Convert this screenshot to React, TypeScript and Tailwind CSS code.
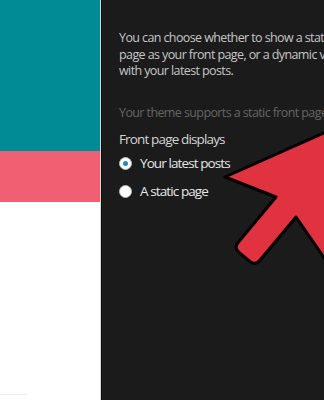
import React from 'react'

const FONT = { fontFamily: '"Open Sans", "Liberation Sans", sans-serif' }

function Radio({ checked }: { checked?: boolean }) {
  return (
    <span className="w-[13px] h-[13px] rounded-full bg-white border border-[#b4b9be] flex items-center justify-center shrink-0">
      {checked && <span className="w-[5px] h-[5px] rounded-full bg-[#1e8cbe]" />}
    </span>
  )
}

function Arrow() {
  return (
    <svg className="absolute inset-0 pointer-events-none" width="324" height="400" viewBox="0 0 324 400">
      <path
        d="M225,177 L362,116 L327,262 L296,217 L259.7,260.5 Q255.2,265.9 249.8,261.4 L239,252.4 Q233.6,247.9 238.1,242.5 L276,197 Z"
        fill="#e1323f"
        stroke="#000"
        strokeWidth="3"
        strokeLinejoin="round"
      />
    </svg>
  )
}

export default function App() {
  return (
    <div className="relative w-[324px] h-[400px] overflow-hidden flex bg-[#1b1b1b]" style={FONT}>
      {/* left preview strip */}
      <div className="w-[101px] flex flex-col shrink-0 border-r border-[#d9d9d9]">
        <div className="h-[151px] bg-[#008b95]" />
        <div className="h-[51px] bg-[#f15f72]" />
        <div className="flex-1 bg-white flex flex-col justify-end pb-[5px]">
          <div className="w-[27px] h-px bg-[#eeeeee]" />
        </div>
      </div>
      <div className="w-px bg-[#0e0e0e]" />

      {/* customizer panel */}
      <div className="flex-1 pl-[17px] pt-[30px] overflow-hidden">
        <p className="text-[12.5px] leading-[16.5px] tracking-[-0.6px] text-[#c6c6c6] whitespace-nowrap">
          You can choose whether to show a static
          <br />
          page as your front page, or a dynamic view
          <br />
          with your latest posts.
        </p>
        <p className="mt-[25px] text-[12.5px] leading-[16.5px] tracking-[-0.6px] text-[#656565] whitespace-nowrap">
          Your theme supports a static front page.
        </p>
        <div className="mt-[9px] text-[13.5px] leading-[18px] tracking-[-0.85px] text-[#d4d4d4] whitespace-nowrap">Front page displays</div>
        <div className="mt-[6px] flex flex-col gap-[10px]">
          <label className="flex items-center gap-[8px] text-[13.5px] leading-[18px] tracking-[-0.9px] text-[#e6e6e6] whitespace-nowrap">
            <Radio checked />
            Your latest posts
          </label>
          <label className="flex items-center gap-[8px] text-[13.5px] leading-[18px] tracking-[-0.9px] text-[#e6e6e6] whitespace-nowrap">
            <Radio />
            A static page
          </label>
        </div>
      </div>

      <Arrow />
    </div>
  )
}
